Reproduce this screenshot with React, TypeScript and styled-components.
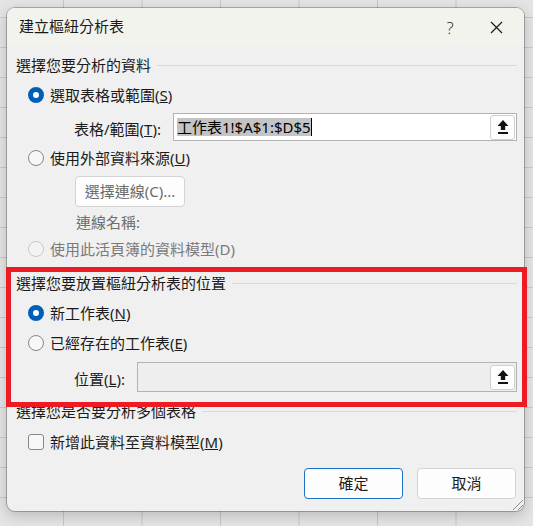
import React from "react";
import styled, { createGlobalStyle } from "styled-components";

const FONT = `"Noto Sans", "Noto Sans CJK TC", sans-serif`;

const GlobalStyle = createGlobalStyle`
  html, body {
    margin: 0;
    padding: 0;
  }
  body {
    width: 533px;
    height: 526px;
    overflow: hidden;
    font-family: ${FONT};
    background-color: #e4e4e4;
    background-image: linear-gradient(to right, #c6c6c6 1px, transparent 1px),
      linear-gradient(to bottom, #c9c9c9 1px, transparent 1px);
    background-size: 78.5px 30px;
    background-position: 63px 17px;
  }
`;

const Page = styled.div`
  position: relative;
  width: 533px;
  height: 526px;
  box-sizing: border-box;
  padding: 8px 9px 0 7px;
`;

const Dialog = styled.div`
  position: relative;
  width: 517px;
  height: 503px;
  background: #f0f0f0;
  border-radius: 8px;
  overflow: hidden;
  box-shadow: 0 0 0 1px rgba(0, 0, 0, 0.25), 0 4px 14px rgba(0, 0, 0, 0.2);
  display: flex;
  flex-direction: column;
`;

const TitleBar = styled.div`
  height: 38px;
  flex: none;
  display: flex;
  align-items: center;
  background: #f3f3ee;
  padding: 0 5px 0 12px;
`;

const Title = styled.div`
  flex: 1;
  font-size: 15px;
  line-height: 1;
  color: #1a1a1a;
  margin-top: -2px;
`;

const TitleButton = styled.div`
  width: 46px;
  height: 38px;
  display: flex;
  align-items: center;
  justify-content: center;
  font-size: 17px;
  font-weight: 300;
  color: #1a1a1a;
  font-family: "Open Sans", sans-serif;
`;

const Body = styled.div`
  flex: 1;
  padding: 9px 7px 0 9px;
  display: flex;
  flex-direction: column;
`;

const SectionHeader = styled.div<{ $top: number }>`
  display: flex;
  align-items: center;
  gap: 6px;
  height: 20px;
  margin-top: ${(p) => p.$top}px;
  font-size: 15px;
  line-height: 1;
  color: #1b1b1b;
  &::after {
    content: "";
    flex: 1;
    height: 1px;
    background: #dadada;
  }
`;

const OptionRow = styled.div<{ $top: number; $muted?: boolean }>`
  display: flex;
  align-items: center;
  gap: 6px;
  height: 22px;
  margin-top: ${(p) => p.$top}px;
  padding-left: 12px;
  font-size: 15px;
  line-height: 1;
  color: ${(p) => (p.$muted ? "#7a7a7a" : "#1b1b1b")};
`;

const Radio = styled.span<{ $on?: boolean; $disabled?: boolean }>`
  flex: none;
  width: 16px;
  height: 16px;
  box-sizing: border-box;
  border-radius: 50%;
  background: ${(p) => (p.$on ? "#ffffff" : p.$disabled ? "#f3f3f3" : "#f7f7f7")};
  border: ${(p) =>
    p.$on
      ? "5px solid #005fb8"
      : p.$disabled
      ? "1px solid #c8c8c8"
      : "1px solid #878787"};
`;

const Checkbox = styled.span`
  flex: none;
  width: 16px;
  height: 16px;
  box-sizing: border-box;
  border-radius: 3px;
  border: 1px solid #878787;
  background: #f7f7f7;
`;

const FieldRow = styled.div<{ $top: number }>`
  display: flex;
  align-items: center;
  margin-top: ${(p) => p.$top}px;
  padding-left: 58px;
`;

const FieldLabel = styled.div<{ $w: number }>`
  width: ${(p) => p.$w}px;
  flex: none;
  padding-top: 5px;
  font-size: 15px;
  line-height: 1;
  color: #1b1b1b;
`;

const InputBox = styled.div<{ $h: number; $disabled?: boolean }>`
  flex: 1;
  height: ${(p) => p.$h}px;
  box-sizing: border-box;
  border: 1px solid #b3b3b3;
  background: ${(p) => (p.$disabled ? "#eeeeee" : "#ffffff")};
  display: flex;
  align-items: center;
  padding: 0 1px 0 3px;
`;

const InputText = styled.div`
  flex: 1;
  display: flex;
  align-items: center;
  font-size: 15px;
  line-height: 1;
  color: #000;
`;

const Selected = styled.span`
  background: #c4c4c4;
  padding: 2px 0 1px;
`;

const Caret = styled.span`
  width: 1px;
  height: 18px;
  background: #000;
`;

const PickButton = styled.div`
  width: 25px;
  height: 25px;
  box-sizing: border-box;
  border: 1px solid #d0d0d0;
  border-radius: 3px;
  background: #fdfdfd;
  display: flex;
  align-items: center;
  justify-content: center;
`;

const SoftButton = styled.div<{ $primary?: boolean; $muted?: boolean }>`
  width: 99px;
  height: 31px;
  box-sizing: border-box;
  display: flex;
  align-items: center;
  justify-content: center;
  border-radius: 4px;
  background: #fdfdfd;
  border: 1px solid ${(p) => (p.$primary ? "#1a73c8" : "#d3d3d3")};
  font-size: 15px;
  line-height: 1;
  color: ${(p) => (p.$muted ? "#6c6c6c" : "#1b1b1b")};
`;

const ConnectButton = styled(SoftButton)`
  width: 110px;
  margin: 7px 0 0 59px;
`;

const MutedText = styled.div<{ $top: number }>`
  height: 20px;
  display: flex;
  align-items: center;
  margin-top: ${(p) => p.$top}px;
  padding-left: 60px;
  font-size: 15px;
  line-height: 1;
  color: #6e6e6e;
`;

const ButtonRow = styled.div`
  display: flex;
  justify-content: flex-end;
  gap: 14px;
  margin: 15px 1px 0 0;
`;

const Grip = styled.svg`
  position: absolute;
  right: 0;
  bottom: 0;
`;

const Highlight = styled.div`
  position: absolute;
  left: 6px;
  top: 267px;
  width: 521px;
  height: 140px;
  box-sizing: border-box;
  border: 5px solid #ed1c24;
  pointer-events: none;
`;

const UploadIcon = () => (
  <svg width="12" height="16" viewBox="0 0 12 16">
    <polygon points="6,1 0.5,7 3.8,7 3.8,11 8.2,11 8.2,7 11.5,7" fill="#111" />
    <rect x="1" y="13" width="10" height="2" fill="#111" />
  </svg>
);

const App = () => {
  return (
    <>
      <GlobalStyle />
      <Page>
        <Dialog>
          <TitleBar>
            <Title>建立樞紐分析表</Title>
            <TitleButton>?</TitleButton>
            <TitleButton>
              <svg width="13" height="13" viewBox="0 0 13 13">
                <path d="M1 1 L12 12 M12 1 L1 12" stroke="#1a1a1a" strokeWidth="1.2" />
              </svg>
            </TitleButton>
          </TitleBar>
          <Body>
            <SectionHeader $top={0}>選擇您要分析的資料</SectionHeader>
            <OptionRow $top={9}>
              <Radio $on />
              <span>
                選取表格或範圍(<u>S</u>)
              </span>
            </OptionRow>
            <FieldRow $top={7}>
              <FieldLabel $w={99}>
                表格/範圍(<u>T</u>):
              </FieldLabel>
              <InputBox $h={28}>
                <InputText>
                  <Selected>工作表1!$A$1:$D$5</Selected>
                  <Caret />
                </InputText>
                <PickButton>
                  <UploadIcon />
                </PickButton>
              </InputBox>
            </FieldRow>
            <OptionRow $top={6}>
              <Radio />
              <span>
                使用外部資料來源(<u>U</u>)
              </span>
            </OptionRow>
            <ConnectButton $muted>選擇連線(C)...</ConnectButton>
            <MutedText $top={5}>連線名稱:</MutedText>
            <OptionRow $top={6} $muted>
              <Radio $disabled />
              <span>使用此活頁簿的資料模型(D)</span>
            </OptionRow>

            <SectionHeader $top={13}>選擇您要放置樞紐分析表的位置</SectionHeader>
            <OptionRow $top={9}>
              <Radio $on />
              <span>
                新工作表(<u>N</u>)
              </span>
            </OptionRow>
            <OptionRow $top={8}>
              <Radio />
              <span>
                已經存在的工作表(<u>E</u>)
              </span>
            </OptionRow>
            <FieldRow $top={8}>
              <FieldLabel $w={63}>
                位置(<u>L</u>):
              </FieldLabel>
              <InputBox $h={30} $disabled>
                <InputText />
                <PickButton>
                  <UploadIcon />
                </PickButton>
              </InputBox>
            </FieldRow>

            <SectionHeader $top={9}>選擇您是否要分析多個表格</SectionHeader>
            <OptionRow $top={10}>
              <Checkbox />
              <span>
                新增此資料至資料模型(<u>M</u>)
              </span>
            </OptionRow>
            <ButtonRow>
              <SoftButton $primary>確定</SoftButton>
              <SoftButton>取消</SoftButton>
            </ButtonRow>
          </Body>
          <Grip width="14" height="14" viewBox="0 0 14 14">
            <path d="M13 3 L3 13 M13 8 L8 13" stroke="#8a8a8a" strokeWidth="1" />
          </Grip>
        </Dialog>
        <Highlight />
      </Page>
    </>
  );
};

export default App;
